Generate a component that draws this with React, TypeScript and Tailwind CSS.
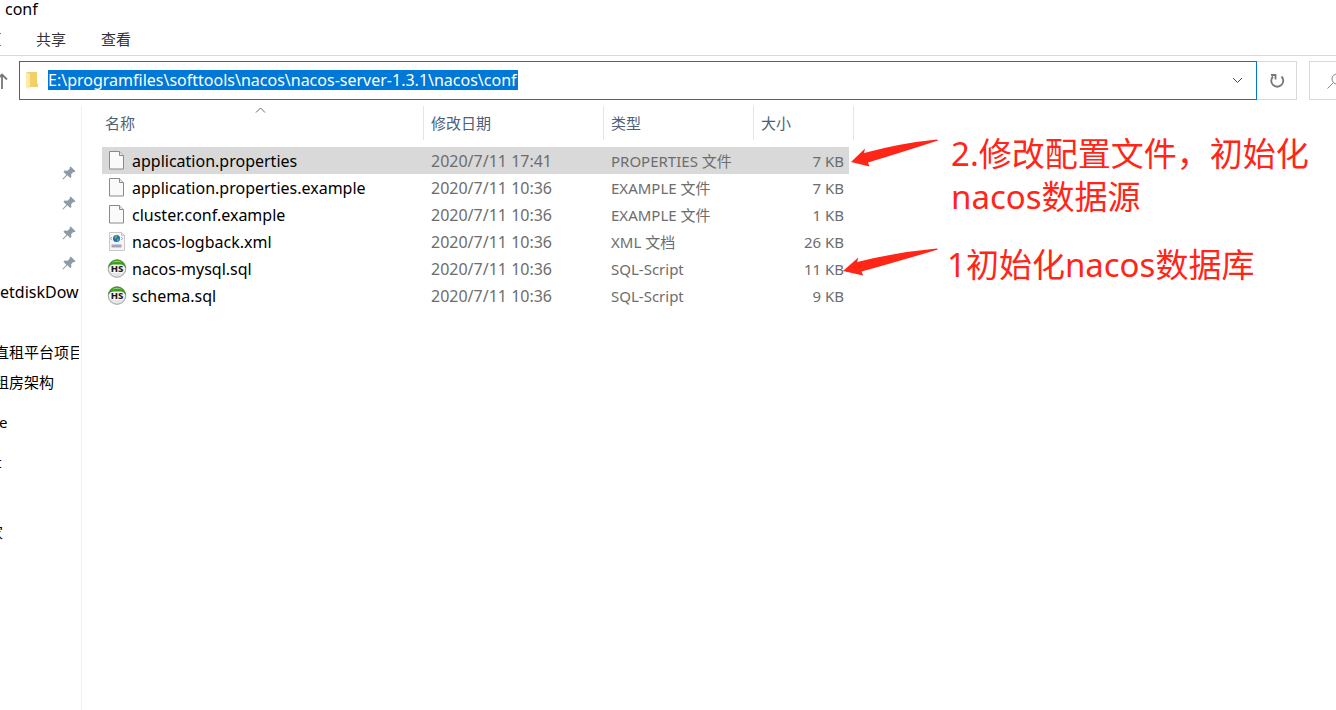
import React from "react";

const FONT = "font-['Noto_Sans','Noto_Sans_CJK_SC',sans-serif]";

function PageIcon() {
  return (
    <svg width="20" height="20" viewBox="0 0 20 20" className="shrink-0" aria-hidden="true">
      <path d="M2.500 .5h10l4 4v13.500h-14z" fill="#fafafa" stroke="#8a8a8a" />
      <path d="M12.500 .5v4h4" fill="#e4e4e4" stroke="#8a8a8a" />
    </svg>
  );
}

function XmlIcon() {
  return (
    <svg width="20" height="20" viewBox="0 0 20 20" className="shrink-0" aria-hidden="true">
      <path d="M2.500 .5h12l3 3v15h-15z" fill="#f5f5f8" stroke="#c8c8cc" />
      <path d="M14.500 .5v3h3" fill="#dedee2" stroke="#c8c8cc" />
      <circle cx="9.500" cy="6.500" r="3.500" fill="#2468c0" />
      <path d="M7.500 4.500c1-1 2-.8 3-.3l-1 2-1.500 1zM10 7l2-.5-.8 2.500-1.200.5z" fill="#53c04a" />
      <path d="M4.800 5L3.500 6.500 4.800 8M14.200 5l1.300 1.500L14.200 8" fill="none" stroke="#8ba4c4" />
      <path d="M4.500 12.500h10v3h-10z" fill="#a4a4be" />
    </svg>
  );
}

function SqlIcon() {
  return (
    <svg width="20" height="20" viewBox="0 0 20 20" className="shrink-0" aria-hidden="true">
      <circle cx="10" cy="9.500" r="8.800" fill="#e6e6e6" stroke="#8a8a8a" strokeWidth=".8" />
      <path d="M1 9.500a9 9 0 0 1 18 0c-1-2-2.500-3.200-4-3.600H5c-1.500.4-3 1.600-4 3.600z" fill="#3a9a1c" />
      <path d="M4.500 4a8 8 0 0 1 11 0c-3-1.200-8-1.200-11 0z" fill="#8fd070" />
      <rect x="2.500" y="5.500" width="15" height="8.500" rx="4" fill="#f6f6f6" />
      <text x="10" y="13" textAnchor="middle" fontSize="9.500" fontWeight="800" fill="#1c1c1c" fontFamily="Noto Sans, sans-serif">HS</text>
    </svg>
  );
}

function Pin() {
  return (
    <svg width="14" height="14" viewBox="0 0 14 14" aria-hidden="true">
      <path d="M8.700 .5l4.800 4.800-1.300 1-.9-.3-2.200 2.300.3 2.600-1.200 1.200-2.800-2.800L1.200 13.500.4 13l4-4.300L1.400 5.800 2.700 4.600l2.800.2L7.900 2.500l-.3-.9z" fill="#8e9aa5" />
    </svg>
  );
}

const files = [
  { name: "application.properties", date: "2020/7/11 17:41", type: "PROPERTIES 文件", size: "7 KB", Icon: PageIcon, selected: true },
  { name: "application.properties.example", date: "2020/7/11 10:36", type: "EXAMPLE 文件", size: "7 KB", Icon: PageIcon },
  { name: "cluster.conf.example", date: "2020/7/11 10:36", type: "EXAMPLE 文件", size: "1 KB", Icon: PageIcon },
  { name: "nacos-logback.xml", date: "2020/7/11 10:36", type: "XML 文档", size: "26 KB", Icon: XmlIcon },
  { name: "nacos-mysql.sql", date: "2020/7/11 10:36", type: "SQL-Script", size: "11 KB", Icon: SqlIcon },
  { name: "schema.sql", date: "2020/7/11 10:36", type: "SQL-Script", size: "9 KB", Icon: SqlIcon },
];

function Arrow({ className }: { className: string }) {
  return (
    <svg viewBox="0 0 88 28" preserveAspectRatio="none" className={className} aria-hidden="true">
      <path d="M0 23L14 9.500l-1 4.500Q50 4 86 0.500L87 1.500Q55 12 17 23.500l1.500 4z" fill="#ff2617" />
    </svg>
  );
}

export default function App() {
  return (
    <div className={`relative flex min-h-screen flex-col overflow-hidden bg-white text-[15px] leading-5 text-black ${FONT}`}>
      <header className="border-b border-[#dadada]">
        <h1 className="h-[23px] pl-[5px] text-base leading-[18px]">conf</h1>
        <nav className="flex h-8 items-center pb-px text-[#333]">
          <span className="w-9" aria-hidden="true">
            <svg width="2" height="14"><path d="M0 1.500h1M0 13.500h1" stroke="#2b8be0" /></svg>
          </span>
          <button className="w-[65px] text-left">共享</button>
          <button>查看</button>
        </nav>
      </header>

      <div className="flex h-[50px] items-start pt-[5px]">
        <button aria-label="上一级" className="flex h-10 w-[19px] items-center">
          <svg width="8" height="18" viewBox="0 0 8 18"><path d="M2 17V3M-4 8.500L2 2.500l5 5" fill="none" stroke="#777" strokeWidth="1.800" /></svg>
        </button>
        <div className="flex h-[39px] flex-1 items-start border border-[#0078d7] pl-1 pt-2">
          <svg width="16" height="20" viewBox="0 0 16 20" className="shrink-0" aria-hidden="true">
            <path d="M2 2h11v11l1 1v3H5z" fill="#f3cf6b" />
            <path d="M2 2l4 2v11l-1 4-3-2z" fill="#ffe9a6" />
          </svg>
          <label className="flex h-5 flex-1 pl-2">
            <span className="sr-only">地址</span>
            <input
              readOnly
              defaultValue="E:\programfiles\softtools\nacos\nacos-server-1.3.1\nacos\conf"
              className="h-5 w-[470px] bg-[#0078d7] text-base leading-5 text-white outline-none"
            />
          </label>
          <button aria-label="历史" className="flex h-5 items-center px-[13px]">
            <svg width="11" height="7" viewBox="0 0 11 7"><path d="M1 1l4.500 4.500L10 1" fill="none" stroke="#444" /></svg>
          </button>
        </div>
        <button aria-label="刷新" className="flex h-[39px] w-10 items-center justify-center border border-l-0 border-[#d9d9d9]">
          <svg width="16" height="16" viewBox="0 0 16 16"><path d="M4 3.500A6 6 0 1 0 12.500 3.500M2 2h4.500v4.500" fill="none" stroke="#777" strokeWidth="1.800" /></svg>
        </button>
        <button aria-label="搜索" className="ml-3 flex h-[39px] w-[27px] items-center overflow-hidden border border-r-0 border-[#d9d9d9] pl-[17px]">
          <svg width="16" height="16" viewBox="0 0 16 16" className="shrink-0"><circle cx="10" cy="6" r="5" fill="none" stroke="#888" /><path d="M6.500 9.500L.5 15.500" stroke="#888" /></svg>
        </button>
      </div>

      <div className="flex flex-1">
        <aside className="w-[82px] shrink-0 overflow-hidden whitespace-nowrap border-r border-[#f0f0f0] pr-[2px] pt-[52px]">
          {[0, 1, 2, 3].map((n) => (
            <div key={n} className="flex h-[30px] items-center justify-end pr-[3px]"><Pin /></div>
          ))}
          <div className="overflow-hidden">
            <div className="h-[60px] pt-1 text-base leading-5">etdiskDow</div>
            <div className="-ml-[6px] h-[30px] pt-1">直租平台项目</div>
            <div className="-ml-[6px] h-[30px] pt-1">租房架构</div>
            <div className="-ml-px mt-[10px] h-10 pt-1">e</div>
            <div className="-ml-1 h-[70px] pt-1">t</div>
            <div className="-ml-3 h-[30px] pt-1">家</div>
          </div>
        </aside>

        <main className="pl-5">
          <table className="w-[752px] table-fixed border-separate border-spacing-0 text-left">
            <colgroup>
              <col className="w-[322px]" /><col className="w-[180px]" /><col className="w-[150px]" /><col className="w-[95px]" /><col className="w-[5px]" />
            </colgroup>
            <thead className="text-[#4c607a]">
              <tr className="h-[34px]">
                <th className="relative border-r border-[#e5e5e5] pl-[3px] font-normal">
                  名称
                  <svg width="11" height="6" viewBox="0 0 11 6" className="absolute left-[153px] top-[1px]"><path d="M1 5.500L5.500 1 10 5.500" fill="none" stroke="#666" /></svg>
                </th>
                <th className="border-r border-[#e5e5e5] pl-[7px] font-normal">修改日期</th>
                <th className="border-r border-[#e5e5e5] pl-[7px] font-normal">类型</th>
                <th className="pl-[7px] font-normal">大小</th>
                <td className="border-r border-[#e5e5e5]" />
              </tr>
              <tr className="h-[7px]"><td colSpan={5} /></tr>
            </thead>
            <tbody className="text-[#6d6d6d]">
              {files.map(({ name, date, type, size, Icon, selected }) => (
                <tr key={name} className="h-[27px]">
                  <td className={selected ? "bg-[#d9d9d9]" : ""}>
                    <div className="flex items-center gap-[5px] pl-[5px] text-base leading-5 text-black"><Icon />{name}</div>
                  </td>
                  <td className={selected ? "bg-[#d9d9d9] pl-[7px] text-base leading-5" : "pl-[7px] text-base leading-5"}>{date}</td>
                  <td className={selected ? "bg-[#d9d9d9] pl-[7px]" : "pl-[7px]"}>{type}</td>
                  <td className={selected ? "bg-[#d9d9d9] pr-[5px] text-right" : "pr-[5px] text-right"}>{size}</td>
                  <td />
                </tr>
              ))}
            </tbody>
          </table>
        </main>
      </div>

      <div className="absolute left-[851px] top-[132px] flex items-start gap-3 text-[33px] leading-[43px] text-[#ff2617]">
        <div className="pt-[7px]"><Arrow className="h-7 w-[88px]" /></div>
        <p className="whitespace-nowrap">2.修改配置文件，初始化<br />nacos数据源</p>
      </div>
      <div className="absolute left-[843px] top-[243px] flex items-start gap-2 text-[33px] leading-[43px] text-[#ff2617]">
        <div className="pt-[5px]"><Arrow className="h-7 w-24" /></div>
        <p className="whitespace-nowrap">1初始化nacos数据库</p>
      </div>
    </div>
  );
}
